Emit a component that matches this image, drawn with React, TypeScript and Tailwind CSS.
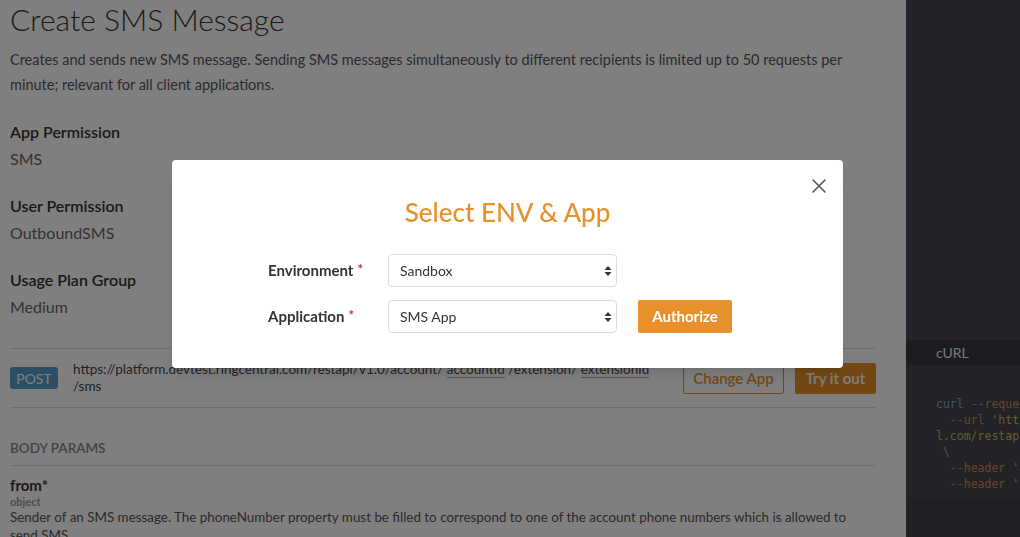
import React from 'react';

function SelectArrows() {
  return (
    <svg width="8" height="12" viewBox="0 0 8 12" className="pointer-events-none absolute right-[5px] top-1/2 -translate-y-1/2">
      <path d="M4 1 L7.5 5 L0.5 5 Z" fill="#333" />
      <path d="M4 11 L7.5 7 L0.5 7 Z" fill="#333" />
    </svg>
  );
}

function FieldRow({ label, value, withButton }: { label: string; value: string; withButton?: boolean }) {
  return (
    <div className="flex items-center">
      <label className="w-[120px] pl-[96px] box-content text-[15px] font-bold text-[#333]">
        {label}
        <span className="relative -top-[2px] ml-[4px] text-[13px] text-[#c9302c]">*</span>
      </label>
      <div className="relative w-[229px]">
        <select
          defaultValue={value}
          className="h-[33px] w-full appearance-none rounded-[4px] border border-[#dddddd] bg-white pl-[11px] pr-[20px] text-[14px] text-[#333] outline-none"
        >
          <option>{value}</option>
        </select>
        <SelectArrows />
      </div>
      {withButton && (
        <button className="ml-[21px] h-[33px] w-[94px] rounded-[2px] bg-[#e8912a] text-[15px] font-bold text-white">
          Authorize
        </button>
      )}
    </div>
  );
}

export default function App() {
  return (
    <div className="flex h-[537px] w-[1020px] overflow-hidden font-['Lato','Noto_Sans',sans-serif]">
      {/* Docs column */}
      <div className="w-[906px] shrink-0 bg-white pl-[10px] pr-[30px]">
        <h1 className="pt-[1px] text-[30px] font-light leading-[36px] text-[#333]">Create SMS Message</h1>
        <p className="mt-[10px] text-[14.5px] leading-[25px] text-[#555]">
          Creates and sends new SMS message. Sending SMS messages simultaneously to different recipients is limited up to 50 requests per minute; relevant for all client applications.
        </p>

        <div className="mt-[24px] space-y-[25px]">
          {[
            ['App Permission', 'SMS'],
            ['User Permission', 'OutboundSMS'],
            ['Usage Plan Group', 'Medium'],
          ].map(([k, v]) => (
            <div key={k}>
              <div className="text-[16px] font-semibold leading-[22px] text-[#333]">{k}</div>
              <div className="mt-[5px] text-[16px] leading-[22px] text-[#666]">{v}</div>
            </div>
          ))}
        </div>

        {/* Endpoint row */}
        <div className="mt-[30px] flex items-center border-y border-[#dddddd] pb-[12px] pt-[12px]">
          <span className="flex h-[22px] w-[48px] items-center justify-center rounded-[3px] bg-[#569acc] text-[14px] text-white">
            POST
          </span>
          <div className="ml-[15px] w-[590px] text-[13.5px] leading-[17px] text-[#444]">
            https://platform.devtest.ringcentral.com/restapi/v1.0/account/{' '}
            <span className="border-b border-[#aaaaaa]">accountId</span> /extension/{' '}
            <span className="border-b border-[#aaaaaa]">extensionId</span> /sms
          </div>
          <div className="ml-auto flex gap-[11px]">
            <button className="h-[31px] w-[101px] rounded-[2px] border border-[#e8912a] text-[15px] font-semibold text-[#e8912a]">
              Change App
            </button>
            <button className="h-[31px] w-[81px] rounded-[2px] bg-[#e8912a] text-[15px] font-semibold text-white">
              Try it out
            </button>
          </div>
        </div>

        <div className="mt-[31px] border-b border-[#dddddd] pb-[8px] text-[13.5px] font-semibold uppercase leading-[18px] text-[#888]">
          Body Params
        </div>
        <div className="pt-[9px]">
          <div className="text-[15px] font-bold leading-[20px] text-[#333]">from*</div>
          <div className="text-[11px] font-bold leading-[13px] text-[#999]">object</div>
          <div className="text-[13.4px] leading-[18px] text-[#555]">
            Sender of an SMS message. The phoneNumber property must be filled to correspond to one of the account phone numbers which is allowed to send SMS
          </div>
        </div>
      </div>

      {/* Code column */}
      <div className="flex min-w-0 flex-1 flex-col overflow-hidden bg-[#444650]">
        <div className="h-[340px] shrink-0" />
        <div className="flex h-[25px] shrink-0 items-center bg-[#36383e] pl-[30px] text-[14px] text-[#eeeeee]">cURL</div>
        <pre className="shrink-0 overflow-hidden whitespace-pre bg-[#44464d] pb-[6px] pl-[30px] pt-[31px] font-['DejaVu_Sans_Mono',monospace] text-[11.5px] leading-[16px]">
          <span className="text-[#8fa9c4]">curl</span> <span className="text-[#d08e4c]">--request POST</span>{' \\\n'}
          {'  '}<span className="text-[#d08e4c]">--url</span> <span className="text-[#c2be62]">'https://platform.devtest.ringcentra</span>{'\n'}
          <span className="text-[#c2be62]">l.com/restapi/v1.0/account/~/extension/~/sms'</span>{'\n'}
          <span className="text-[#aaaaaa]">{' \\'}</span>{'\n'}
          {'  '}<span className="text-[#d08e4c]">--header</span> <span className="text-[#c2be62]">'accept: application/json'</span>{' \\\n'}
          {'  '}<span className="text-[#d08e4c]">--header</span> <span className="text-[#c2be62]">'content-type: application/json'</span>
        </pre>
        <div className="flex-1 bg-[#3e4046]" />
      </div>

      {/* Backdrop */}
      <div className="fixed inset-0 bg-black/50" />

      {/* Modal */}
      <div className="fixed left-[172px] top-[160px] h-[208px] w-[671px] rounded-[4px] bg-white shadow-lg">
        <button className="absolute right-[15px] top-[17px] p-[1px]">
          <svg width="16" height="16" viewBox="0 0 16 16">
            <path d="M2 2 L14 14 M14 2 L2 14" stroke="#555" strokeWidth="1.6" strokeLinecap="round" />
          </svg>
        </button>
        <h2 className="pt-[37px] text-center text-[26px] font-medium leading-[31px] text-[#e8912a]">Select ENV &amp; App</h2>
        <div className="mt-[26px] space-y-[13px]">
          <FieldRow label="Environment" value="Sandbox" />
          <FieldRow label="Application" value="SMS App" withButton />
        </div>
      </div>
    </div>
  );
}
